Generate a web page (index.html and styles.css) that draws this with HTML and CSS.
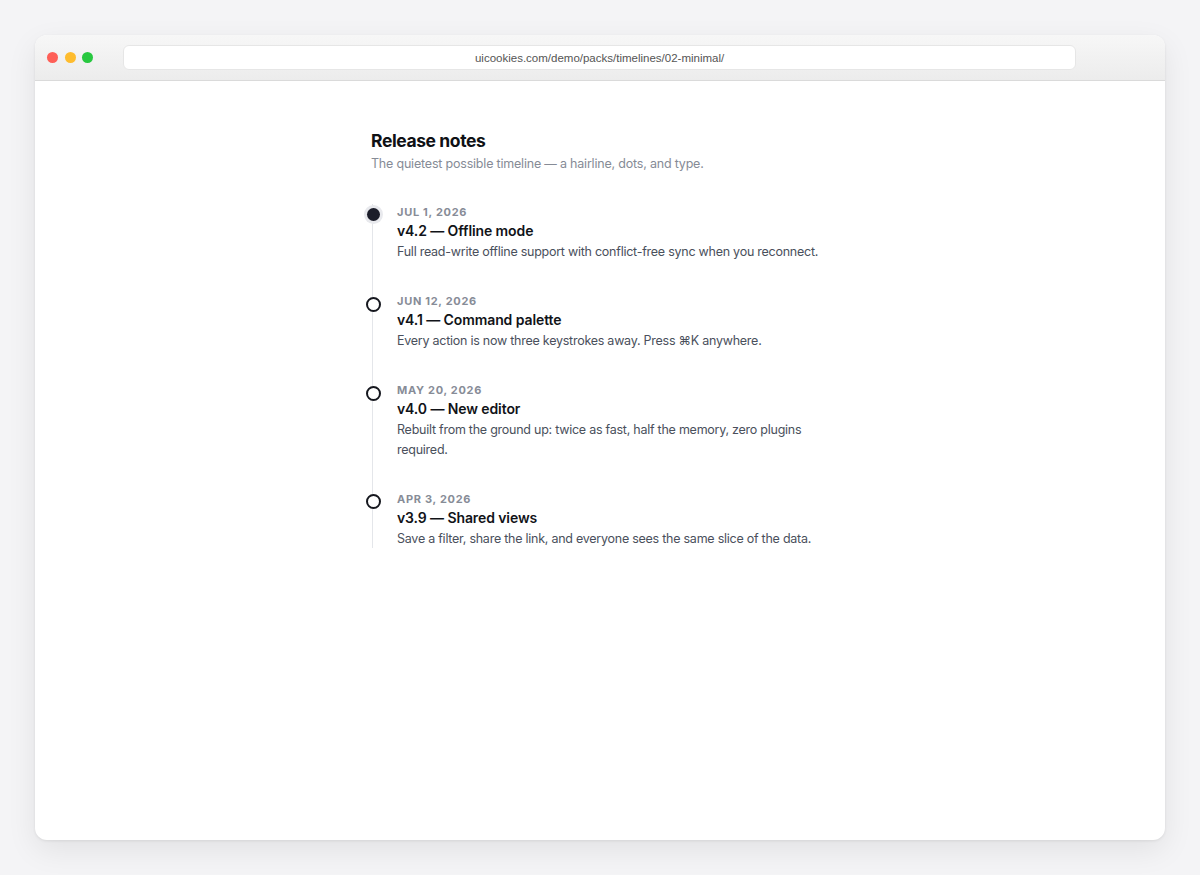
FILE: index.html
```html
<!DOCTYPE html>
<html lang="en">
  <head>
    <meta charset="UTF-8" />
    <meta name="viewport" content="width=device-width, initial-scale=1.0" />
    <title>Release notes</title>
    <link rel="stylesheet" href="styles.css">
  </head>
  <body>
    <div class="window">
      <header class="titlebar">
        <div class="lights">
          <span class="light red"></span>
          <span class="light yellow"></span>
          <span class="light green"></span>
        </div>
        <div class="url">uicookies.com/demo/packs/timelines/02-minimal/</div>
      </header>

      <main class="page">
        <div class="content">
          <h1 class="heading">Release notes</h1>
          <p class="subtitle">The quietest possible timeline — a hairline, dots, and type.</p>

          <ol class="timeline">
            <li class="entry">
              <span class="dot current"></span>
              <div class="date">Jul 1, 2026</div>
              <h3 class="entry-title">v4.2 — Offline mode</h3>
              <p class="entry-text">Full read-write offline support with conflict-free sync when you reconnect.</p>
            </li>
            <li class="entry">
              <span class="dot"></span>
              <div class="date">Jun 12, 2026</div>
              <h3 class="entry-title">v4.1 — Command palette</h3>
              <p class="entry-text">Every action is now three keystrokes away. Press ⌘K anywhere.</p>
            </li>
            <li class="entry">
              <span class="dot"></span>
              <div class="date">May 20, 2026</div>
              <h3 class="entry-title">v4.0 — New editor</h3>
              <p class="entry-text">Rebuilt from the ground up: twice as fast, half the memory, zero plugins required.</p>
            </li>
            <li class="entry">
              <span class="dot"></span>
              <div class="date">Apr 3, 2026</div>
              <h3 class="entry-title">v3.9 — Shared views</h3>
              <p class="entry-text">Save a filter, share the link, and everyone sees the same slice of the data.</p>
            </li>
          </ol>
        </div>
      </main>
    </div>
  </body>
</html>
```

FILE: styles.css
```css
* {
  margin: 0;
  padding: 0;
  box-sizing: border-box;
}
body {
  background: #f4f4f6;
  padding: 35px;
  font-family: Inter, 'Noto Sans', sans-serif;
}
.window {
  width: 1130px;
  height: 805px;
  background: #fff;
  border-radius: 12px;
  overflow: hidden;
  display: flex;
  flex-direction: column;
  box-shadow: 0 10px 30px rgba(0, 0, 0, 0.08), 0 1px 3px rgba(0, 0, 0, 0.08);
}
.titlebar {
  height: 46px;
  flex-shrink: 0;
  display: flex;
  align-items: center;
  padding-left: 12px;
  padding-right: 89px;
  background: linear-gradient(#f7f7f7, #ececec);
  border-bottom: 1px solid #dadada;
}
.lights {
  display: flex;
  gap: 6.6px;
}
.light {
  width: 11px;
  height: 11px;
  border-radius: 50%;
}
.red {background: #fe5f57;}
.yellow {background: #febc2e;}
.green {background: #28c840;}
.url {
  flex: 1;
  margin-left: 30px;
  height: 25px;
  border-radius: 6px;
  background: #fff;
  border: 1px solid #e6e6e6;
  display: flex;
  align-items: center;
  justify-content: center;
  font-family: 'Liberation Sans', Arial, sans-serif;
  font-size: 11.5px;
  color: #555;
}
.page {
  flex: 1;
  padding-top: 48px;
}
.content {
  width: 458px;
  margin: 0 auto;
}
.heading {
  font-size: 17.5px;
  line-height: 24px;
  font-weight: 700;
  color: #0f1115;
  letter-spacing: -0.4px;
}
.subtitle {
  margin-top: 1px;
  font-size: 12.5px;
  line-height: 20px;
  color: #868b96;
  letter-spacing: -0.2px;
}
.timeline {
  list-style: none;
  margin-top: 30px;
  margin-left: 1px;
  border-left: 1px solid #e4e6ea;
}
.entry {
  position: relative;
  padding-left: 24px;
  padding-bottom: 31.5px;
}
.entry:last-child {
  padding-bottom: 0;
}
.dot {
  position: absolute;
  left: -7px;
  top: 3.5px;
  width: 15px;
  height: 15px;
  border-radius: 50%;
  background: #fff;
  border: 2.5px solid #16181f;
}
.dot.current {
  left: -6px;
  top: 4px;
  width: 13px;
  height: 13px;
  border: none;
  background: #1b1d29;
  box-shadow: 0 0 0 3px #e8e9ed;
}
.date {
  font-size: 11px;
  line-height: 16px;
  font-weight: 700;
  letter-spacing: 0.7px;
  text-transform: uppercase;
  color: #878c97;
}
.entry-title {
  margin-top: 1px;
  font-size: 14px;
  line-height: 20px;
  font-weight: 600;
  color: #111318;
  letter-spacing: -0.1px;
}
.entry-text {
  margin-top: 1px;
  font-size: 12.5px;
  line-height: 19.5px;
  color: #4a505c;
  letter-spacing: -0.25px;
  max-width: 432px;
}
```
